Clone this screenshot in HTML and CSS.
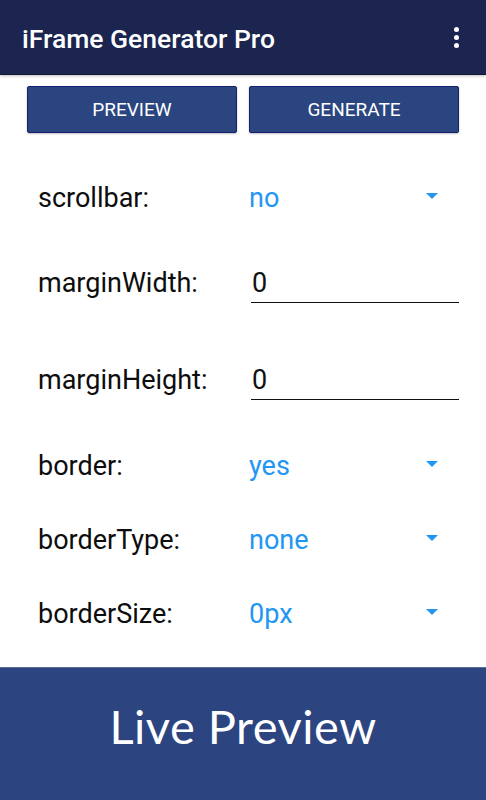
FILE: index.html
```html
<!DOCTYPE html>
<html>
<head>
<meta charset="utf-8">
<link rel="stylesheet" href="styles.css">
</head>
<body>
<div class="app">
  <header class="appbar">
    <h1 class="title">iFrame Generator Pro</h1>
    <div class="kebab"><span></span><span></span><span></span></div>
  </header>
  <div class="actions">
    <button class="btn">PREVIEW</button>
    <button class="btn">GENERATE</button>
  </div>
  <main class="form">
    <div class="row spin r1">
      <span class="label">scrollbar:</span>
      <span class="value">no</span>
      <span class="arrow"></span>
    </div>
    <div class="row edit r2">
      <span class="label">marginWidth:</span>
      <span class="input">0</span>
    </div>
    <div class="row edit r3">
      <span class="label">marginHeight:</span>
      <span class="input">0</span>
    </div>
    <div class="row spin r4">
      <span class="label">border:</span>
      <span class="value">yes</span>
      <span class="arrow"></span>
    </div>
    <div class="row spin r5">
      <span class="label">borderType:</span>
      <span class="value">none</span>
      <span class="arrow"></span>
    </div>
    <div class="row spin r6">
      <span class="label">borderSize:</span>
      <span class="value">0px</span>
      <span class="arrow"></span>
    </div>
  </main>
  <footer class="live">Live Preview</footer>
</div>
</body>
</html>
```
FILE: styles.css
```css
* { box-sizing: border-box; }
html, body { margin: 0; padding: 0; }
body {
  font-family: Roboto, "Noto Sans", sans-serif;
  background: #ffffff;
}
.app {
  width: 486px;
  height: 800px;
  display: flex;
  flex-direction: column;
  overflow: hidden;
}
.appbar {
  height: 75px;
  flex: none;
  background: #1b2550;
  border-bottom: 1px solid #0f1638;
  box-shadow: 0 1px 3px rgba(0,0,0,0.25);
  display: flex;
  align-items: center;
  padding: 0 27px 0 22px;
  position: relative;
  z-index: 1;
}
.title {
  margin: 0;
  flex: 1;
  color: #fff;
  font-size: 26.5px;
  font-weight: 500;
  margin-top: 2px;
}
.kebab {
  display: flex;
  flex-direction: column;
  gap: 3px;
}
.kebab span {
  width: 5px;
  height: 5px;
  border-radius: 50%;
  background: #fff;
}
.actions {
  flex: none;
  display: flex;
  gap: 12px;
  padding: 11px 27px 0 27px;
}
.btn {
  flex: 1;
  height: 47px;
  background: #2b4580;
  border: 1px solid #15206e;
  border-radius: 2px;
  color: #fff;
  font-family: Roboto, sans-serif;
  font-size: 19px;
  box-shadow: 0 1px 2px rgba(0,0,0,0.25);
  padding: 0;
}
.form {
  flex: 1;
  padding: 40px 27px 0 38px;
}
.row {
  display: flex;
  align-items: center;
  height: 50px;
  font-size: 27px;
}
.r2 { margin-top: 35px; }
.r3 { margin-top: 47px; }
.r4 { margin-top: 36px; }
.r5 { margin-top: 24px; }
.r6 { margin-top: 24px; }
.label {
  width: 211px;
  flex: none;
  color: #0d0d0d;
}
.value {
  flex: 1;
  color: #2196f3;
}
.arrow {
  width: 0;
  height: 0;
  border-left: 6px solid transparent;
  border-right: 6px solid transparent;
  border-top: 6px solid #2196f3;
  margin-right: 21px;
  margin-top: -4px;
}
.input {
  flex: 1;
  margin-left: 2px;
  height: 39px;
  line-height: 38px;
  padding-left: 1px;
  border-bottom: 1px solid #111;
  color: #111;
}
.live {
  flex: none;
  height: 133px;
  background: #2c4580;
  border-top: 1px solid #5a6f9c;
  color: #fff;
  display: flex;
  align-items: center;
  justify-content: center;
  padding-bottom: 16px;
  font-family: Lato, sans-serif;
  font-weight: 400;
  font-size: 47px;
  letter-spacing: 0.5px;
}
```
